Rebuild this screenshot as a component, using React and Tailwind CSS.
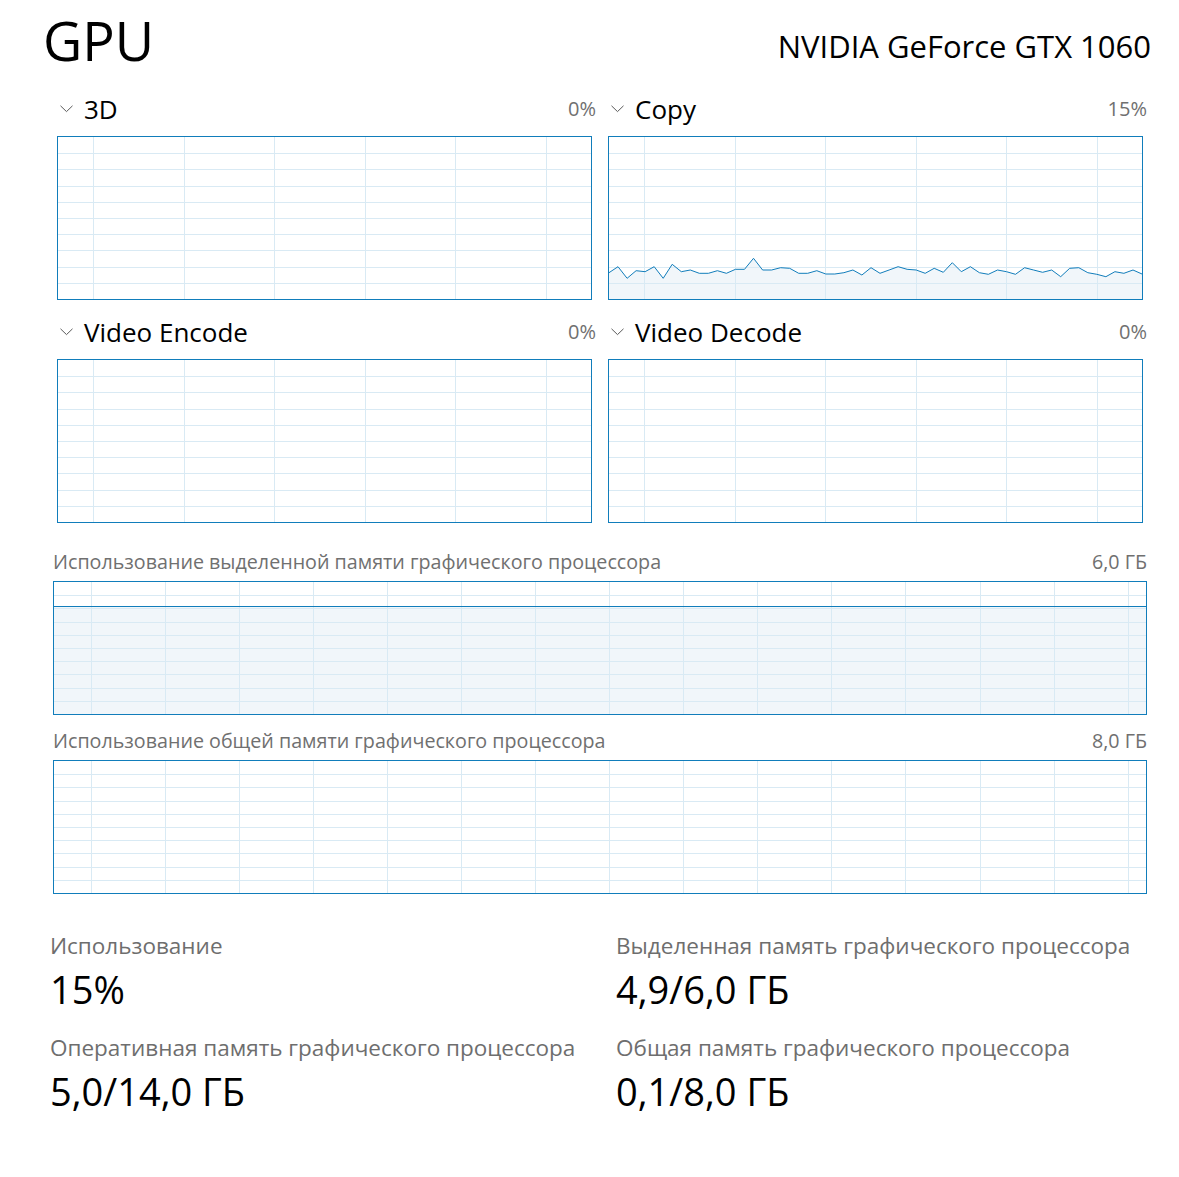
import React from 'react';

const BORDER = '#117dbb';
const GRID = '#d9eaf4';
const FILL = '#f1f6fa';

// copy engine history, y offsets (px) from the top of the plot area
const copyData = [
  135.7, 129.7, 141.3, 133.7, 134.7, 129.7, 141.3, 127.3, 134.7, 133, 136.3, 136.3, 133.7, 136.3, 132.3,
  132.3, 121.3, 133, 133, 130.7, 131.3, 136.3, 136.3, 133.7, 137, 137, 135.7, 133, 138, 130.7, 136.3,
  133, 129.7, 132.3, 133, 136.3, 131.3, 135.3, 125.7, 134.7, 129.7, 135.7, 137.3, 133, 134.7, 137.3,
  130.7, 133, 135.3, 133, 139.7, 131.3, 130.7, 135.7, 137.3, 139.7, 134.7, 136.3, 133, 137,
];

const Chevron = () => (
  <svg width="13" height="8" viewBox="0 0 13 8" className="shrink-0">
    <polyline points="0.5,0.8 6.5,6.6 12.5,0.8" fill="none" stroke="#5a5a5a" strokeWidth="1" />
  </svg>
);

const Plot = ({ w, h, offset, spacing, data, level }) => {
  const verticals = [];
  for (let x = offset; x < w - 2; x += spacing) verticals.push(Math.round(x) + 0.5);
  const horizontals = [];
  for (let i = 1; i < 10; i++) horizontals.push(Math.round((i * h) / 10) + 0.5);

  let area = null;
  let line = null;
  if (data) {
    const pts = data.map((y, i) => `${((i * w) / (data.length - 1)).toFixed(1)},${y}`);
    line = pts.join(' ');
    area = `0,${h} ${line} ${w},${h}`;
  }

  return (
    <div className="border w-fit" style={{ borderColor: BORDER }}>
      <svg width={w} height={h} className="block">
        {level != null && <rect x="0" y={level} width={w} height={h - level} fill={FILL} />}
        {area && <polygon points={area} fill={FILL} />}
        {horizontals.map((y) => (
          <line key={'h' + y} x1="0" x2={w} y1={y} y2={y} stroke={GRID} strokeWidth="1" />
        ))}
        {verticals.map((x) => (
          <line key={'v' + x} x1={x} x2={x} y1="0" y2={h} stroke={GRID} strokeWidth="1" />
        ))}
        {level != null && (
          <line x1="0" x2={w} y1={level + 0.5} y2={level + 0.5} stroke={BORDER} strokeWidth="1" />
        )}
        {line && <polyline points={line} fill="none" stroke={BORDER} strokeWidth="1" />}
      </svg>
    </div>
  );
};

const Engine = ({ name, value, data }) => (
  <div>
    <div className="flex items-center h-[36px] mb-[9px]">
      <div className="w-[31px] pl-[7px] flex items-center">
        <Chevron />
      </div>
      <span className="text-[26px] leading-[36px] text-black">{name}</span>
      <span className="ml-auto text-[20px] leading-[36px] text-[#707070]">{value}</span>
    </div>
    <div className="pl-[4px]">
      <Plot w={533} h={162} offset={35} spacing={90.6} data={data} />
    </div>
  </div>
);

const MemoryChart = ({ label, value, level, className }) => (
  <div className={className}>
    <div className="flex items-center h-[24px] mb-[7px] text-[19.7px] leading-[24px] text-[#707070]">
      <span>{label}</span>
      <span className="ml-auto">{value}</span>
    </div>
    <Plot w={1092} h={132} offset={36.7} spacing={74.07} level={level} />
  </div>
);

const Stat = ({ label, value }) => (
  <div className="mb-[20px]">
    <div className="text-[22.5px] leading-[30px] text-[#6e6e6e]">{label}</div>
    <div className="mt-[4px] text-[38px] leading-[48px] text-black">{value}</div>
  </div>
);

export default function App() {
  return (
    <div
      className="w-[1179px] h-[1177px] bg-white overflow-hidden"
      style={{ fontFamily: '"Open Sans", "Noto Sans", sans-serif' }}
    >
      <div className="flex justify-between pl-[43px] pr-[28px]">
        <div className="mt-[13px] text-[54px] leading-[54px] text-black">GPU</div>
        <div className="mt-[31px] text-[31px] leading-[30px] text-black">NVIDIA GeForce GTX 1060</div>
      </div>

      <div className="ml-[53px] w-[1094px] mt-[24px]">
        <div className="grid grid-cols-[543px_543px] gap-x-[8px] gap-y-[14px]">
          <Engine name="3D" value="0%" />
          <Engine name="Copy" value="15%" data={copyData} />
          <Engine name="Video Encode" value="0%" />
          <Engine name="Video Decode" value="0%" />
        </div>

        <MemoryChart
          className="mt-[27px]"
          label="Использование выделенной памяти графического процессора"
          value="6,0 ГБ"
          level={24}
        />
        <MemoryChart
          className="mt-[14px]"
          label="Использование общей памяти графического процессора"
          value="8,0 ГБ"
        />
      </div>

      <div className="ml-[50px] mt-[37px] grid grid-cols-[566px_1fr]">
        <div>
          <Stat label="Использование" value="15%" />
          <Stat label="Оперативная память графического процессора" value="5,0/14,0 ГБ" />
        </div>
        <div>
          <Stat label="Выделенная память графического процессора" value="4,9/6,0 ГБ" />
          <Stat label="Общая память графического процессора" value="0,1/8,0 ГБ" />
        </div>
      </div>
    </div>
  );
}
